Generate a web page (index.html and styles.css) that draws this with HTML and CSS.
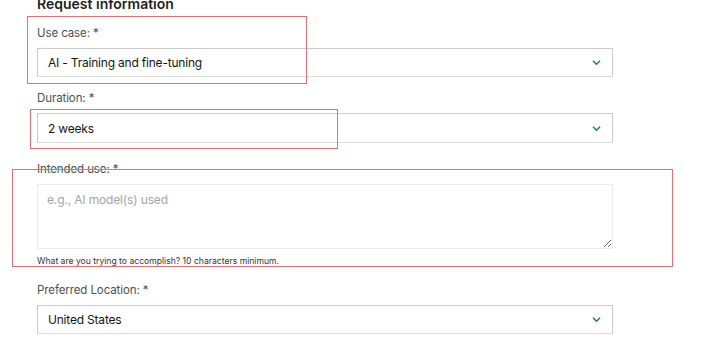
FILE: index.html
```html
<!DOCTYPE html>
<html lang="en">
<head>
  <meta charset="UTF-8">
  <meta name="viewport" content="width=device-width, initial-scale=1.0">
  <title>Request information</title>
  <link rel="stylesheet" href="styles.css">
</head>
<body>
  <div class="form">
    <h2 class="form-title">Request information</h2>

    <div class="field field-usecase">
      <label class="field-label">Use case: *</label>
      <div class="select">
        <span>AI - Training and fine-tuning</span>
        <svg class="chevron" width="9" height="5" viewBox="0 0 9 5"><path d="M1 0.8l3.5 3.4 3.5-3.4" fill="none" stroke="#2b7a78" stroke-width="1.6"/></svg>
      </div>
      <div class="mark mark-usecase"></div>
    </div>

    <div class="field field-duration">
      <label class="field-label">Duration: *</label>
      <div class="select">
        <span>2 weeks</span>
        <svg class="chevron" width="9" height="5" viewBox="0 0 9 5"><path d="M1 0.8l3.5 3.4 3.5-3.4" fill="none" stroke="#2b7a78" stroke-width="1.6"/></svg>
      </div>
      <div class="mark mark-duration"></div>
    </div>

    <div class="field field-use">
      <label class="field-label">Intended use: *</label>
      <textarea class="textarea" placeholder="e.g., AI model(s) used"></textarea>
      <div class="help">What are you trying to accomplish? 10 characters minimum.</div>
      <div class="mark mark-use"></div>
    </div>

    <div class="field field-location">
      <label class="field-label">Preferred Location: *</label>
      <div class="select">
        <span>United States</span>
        <svg class="chevron" width="9" height="5" viewBox="0 0 9 5"><path d="M1 0.8l3.5 3.4 3.5-3.4" fill="none" stroke="#2b7a78" stroke-width="1.6"/></svg>
      </div>
    </div>
  </div>
</body>
</html>
```

FILE: styles.css
```css
body {
  margin: 0;
  background: #fff;
  font-family: Inter, "Noto Sans", sans-serif;
  color: #151515;
  overflow: hidden;
}
.form {
  width: 576px;
  padding-left: 37px;
}
.form-title {
  margin: -6px 0 0;
  font-size: 14px;
  line-height: 19px;
  font-weight: 600;
  color: #1f1f1f;
}
.field {
  position: relative;
}
.field-usecase {
  margin-top: 12px;
}
.field-duration {
  margin-top: 13px;
}
.field-use {
  margin-top: 18px;
}
.field-location {
  margin-top: 15px;
}
.field-label {
  display: block;
  font-size: 11.5px;
  letter-spacing: -0.1px;
  line-height: 16px;
  color: #4f4f4f;
  margin-bottom: 7px;
}
.select {
  display: flex;
  align-items: center;
  justify-content: space-between;
  height: 29px;
  box-sizing: border-box;
  padding: 0 11px 0 10px;
  border: 1px solid #cacace;
  border-bottom-color: #dcdcdc;
  font-size: 12px;
  letter-spacing: -0.2px;
  color: #151515;
}
.field-duration .select {
  height: 30px;
}
.chevron {
  display: block;
}
.textarea {
  display: block;
  width: 100%;
  height: 65px;
  box-sizing: border-box;
  margin: 0;
  padding: 7px 9px;
  border: 1px solid #ececec;
  font-family: inherit;
  font-size: 12px;
  letter-spacing: -0.15px;
  color: #151515;
  resize: vertical;
  outline: none;
}
.textarea::placeholder {
  color: #a5a5a5;
}
.help {
  margin-top: 6px;
  font-size: 8.6px;
  line-height: 12px;
  color: #333;
}
.mark {
  position: absolute;
  border: 1.5px solid #f06a73;
  box-sizing: border-box;
}
.mark-usecase {
  left: -10px;
  top: -9px;
  width: 280px;
  height: 68px;
}
.mark-duration {
  left: -7px;
  top: 19px;
  width: 308px;
  height: 40px;
}
.mark-use {
  left: -25px;
  top: 8px;
  width: 661px;
  height: 98px;
}
```
